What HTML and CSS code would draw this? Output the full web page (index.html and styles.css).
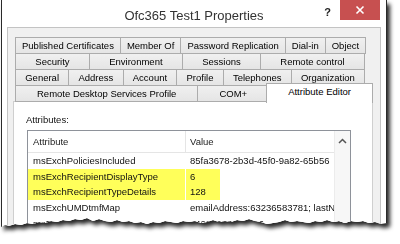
FILE: index.html
```html
<!DOCTYPE html>
<html lang="en">
<head>
  <meta charset="UTF-8">
  <title>Ofc365 Test1 Properties</title>
  <link rel="stylesheet" href="styles.css">
</head>
<body>
  <div class="frame">
    <div class="window">
      <!-- Title bar -->
      <div class="titlebar">
        <span></span>
        <div class="title">Ofc365 Test1 Properties</div>
        <div class="controls">
          <span class="help">?</span>
          <span class="close">
            <svg width="10" height="10" viewBox="0 0 10 10"><path d="M1.5 1.5 L8.5 8.5 M8.5 1.5 L1.5 8.5" stroke="#fff" stroke-width="1.6" fill="none"/></svg>
          </span>
        </div>
      </div>

      <div class="client">
        <!-- Tab rows -->
        <div class="tabs">
          <div class="tab-row short">
            <div class="tab">Published Certificates</div>
            <div class="tab">Member Of</div>
            <div class="tab">Password Replication</div>
            <div class="tab">Dial-in</div>
            <div class="tab">Object</div>
          </div>
          <div class="tab-row short">
            <div class="tab">Security</div>
            <div class="tab">Environment</div>
            <div class="tab">Sessions</div>
            <div class="tab">Remote control</div>
          </div>
          <div class="tab-row short">
            <div class="tab">General</div>
            <div class="tab">Address</div>
            <div class="tab">Account</div>
            <div class="tab">Profile</div>
            <div class="tab">Telephones</div>
            <div class="tab">Organization</div>
          </div>
          <div class="tab-row">
            <div class="tab">Remote Desktop Services Profile</div>
            <div class="tab">COM+</div>
            <div class="tab active">Attribute Editor</div>
          </div>
        </div>

        <!-- Attribute Editor page -->
        <div class="page">
          <div class="label">Attributes:</div>
          <div class="list">
            <div class="table">
              <div class="row head">
                <div class="c1">Attribute</div>
                <div class="c2">Value</div>
              </div>
              <div class="row">
                <div class="c1">msExchPoliciesIncluded</div>
                <div class="c2">85fa3678-2b3d-45f0-9a82-65b56</div>
              </div>
              <div class="row hl">
                <div class="c1">msExchRecipientDisplayType</div>
                <div class="c2">6</div>
              </div>
              <div class="row hl">
                <div class="c1">msExchRecipientTypeDetails</div>
                <div class="c2">128</div>
              </div>
              <div class="row">
                <div class="c1">msExchUMDtmfMap</div>
                <div class="c2">emailAddress:63236583781; lastN</div>
              </div>
              <div class="row">
                <div class="c1">msExchVersion</div>
                <div class="c2">44220983382016</div>
              </div>
            </div>
            <div class="scrollbar">
              <svg width="9" height="6" viewBox="0 0 9 6"><path d="M1 5 L4.5 1.5 L8 5" stroke="#555" stroke-width="1.5" fill="none"/></svg>
            </div>
          </div>
        </div>
      </div>
    </div>
  </div>
</body>
</html>
```

FILE: styles.css
```css
body {
  margin: 0;
  width: 400px;
  height: 244px;
  overflow: hidden;
  background: #fff;
  font-family: "Liberation Sans", Arial, sans-serif;
  font-size: 9.5px;
  color: #111;
}
.frame {
  margin-left: 1px;
  width: 386px;
  filter: drop-shadow(3px 4px 2px rgba(0,0,0,0.85));
}
.window {
  box-sizing: border-box;
  width: 386px;
  height: 230px;
  overflow: hidden;
  padding: 0 5px;
  background: #fff;
  border-left: 1px solid #2a2a2a;
  border-right: 1px solid #2a2a2a;
  clip-path: polygon(0 0, 386px 0, 386px 223px, 380px 224px, 374px 222px, 368px 223px, 362px 221px, 356px 222px, 350px 221px, 344px 223px, 338px 221px, 332px 222px, 326px 220px, 320px 222px, 314px 221px, 308px 223px, 302px 222px, 296px 221px, 290px 222px, 284px 220px, 278px 222px, 272px 223px, 266px 224px, 260px 222px, 254px 221px, 248px 219px, 242px 221px, 236px 220px, 230px 222px, 224px 221px, 218px 222px, 212px 220px, 206px 222px, 200px 223px, 194px 221px, 188px 222px, 182px 221px, 176px 223px, 170px 222px, 164px 221px, 158px 223px, 152px 222px, 146px 224px, 140px 222px, 134px 223px, 128px 221px, 122px 222px, 116px 220px, 110px 222px, 104px 221px, 98px 219px, 92px 221px, 86px 218px, 80px 220px, 74px 219px, 68px 221px, 62px 220px, 56px 222px, 50px 221px, 44px 223px, 38px 222px, 32px 224px, 26px 223px, 20px 225px, 14px 224px, 8px 226px, 4px 225px, 0 227px);
}

/* title bar */
.titlebar {
  height: 27px;
  display: grid;
  grid-template-columns: 1fr auto 1fr;
}
.title {
  font-size: 13px;
  line-height: 23px;
  padding-top: 4px;
  color: #333;
}
.controls {
  display: flex;
  justify-content: flex-end;
  align-items: flex-start;
}
.help {
  font-size: 11px;
  font-weight: bold;
  line-height: 13px;
  margin-top: 6px;
  margin-right: 9px;
  color: #222;
}
.close {
  width: 40px;
  height: 20px;
  margin-right: 1px;
  background: #c75050;
  display: flex;
  align-items: center;
  justify-content: center;
}

/* client area */
.client {
  height: 240px;
  background: #f0f0f0;
  border: 1px solid #c3c3c3;
  padding: 9px 7px 0 5px;
}
.tabs {
  margin: 0 2px;
}
.tab-row {
  display: flex;
  align-items: flex-start;
  margin-top: -1px;
}
.tab-row:first-child {
  margin-top: 0;
}
.tab-row.short {
  margin-right: 6px;
}
.tab {
  flex: 1 1 auto;
  box-sizing: border-box;
  height: 17px;
  line-height: 15px;
  padding: 0 6px;
  margin-left: -1px;
  border: 1px solid #acacac;
  background: linear-gradient(#f0f0f0, #e5e5e5);
  color: #000;
  text-align: center;
  white-space: nowrap;
}
.tab:first-child {
  margin-left: 0;
}
.tab.active {
  position: relative;
  z-index: 1;
  height: 20px;
  line-height: 16px;
  margin: -2px -2px -1px -3px;
  border-bottom: none;
  background: #fff;
}

/* page */
.page {
  margin-top: -1px;
  height: 200px;
  background: #fff;
  border: 1px solid #cfcfcf;
  padding: 12px 0 0 12px;
}
.label {
  line-height: 12px;
  color: #111;
}
.list {
  display: flex;
  margin: 4px 0 0 1px;
  width: 324px;
  height: 120px;
  box-sizing: border-box;
  border: 1px solid #8e929a;
}
.table {
  flex: 1;
  overflow: hidden;
}
.row {
  display: flex;
  height: 15.7px;
  line-height: 15.7px;
  white-space: nowrap;
}
.row .c1 {
  width: 152px;
  padding-left: 5px;
  margin-right: 1px;
  overflow: hidden;
}
.row .c2 {
  flex: 1;
  padding-left: 4px;
  overflow: hidden;
}
.row.head {
  height: 21px;
  line-height: 21px;
  border-bottom: 1px solid #e5e5e5;
  color: #222;
}
.row.head .c1 {
  margin-right: 0;
  border-right: 1px solid #e5e5e5;
}
.row.hl .c1 {
  background: #ffff5a;
}
.row.hl .c2 {
  background: linear-gradient(to right, #ffff5a 34px, transparent 34px);
}
.scrollbar {
  width: 16px;
  background: #f7f7f7;
  border-left: 1px solid #ececec;
  display: flex;
  justify-content: center;
  align-items: flex-start;
  padding-top: 7px;
  box-sizing: border-box;
}
```
